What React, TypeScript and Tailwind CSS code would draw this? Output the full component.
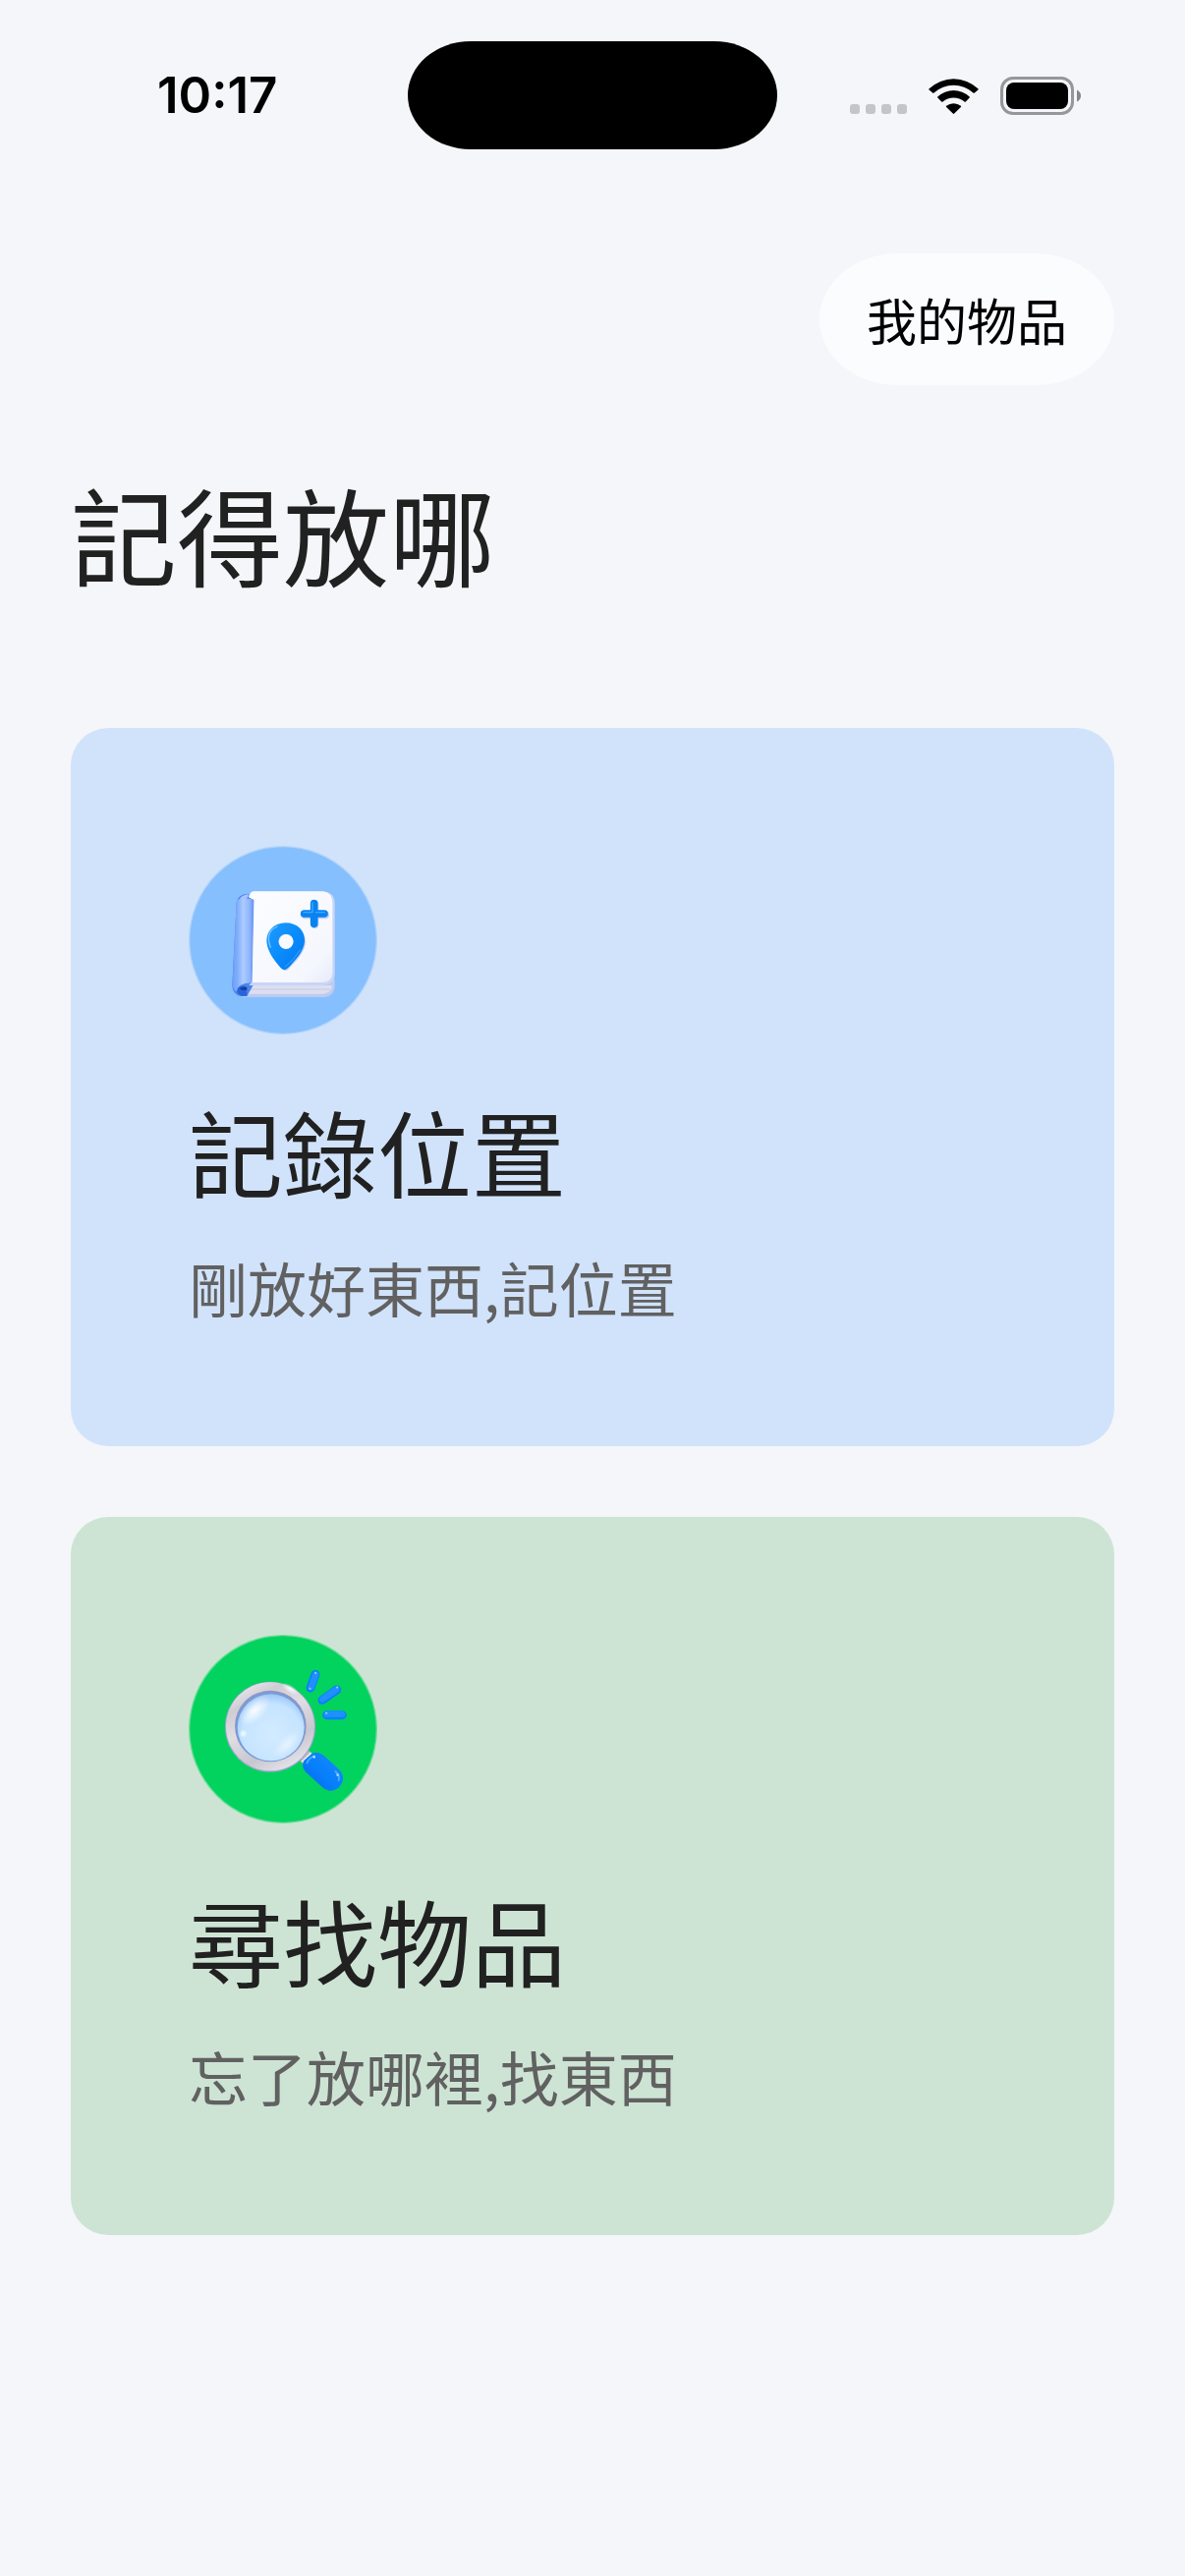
import React from 'react';
import clsx from 'clsx';

const StatusBar = () => (
  <header className="grid grid-cols-[1fr_auto_1fr] items-center pt-[42px] text-black">
    <time className="pl-40 font-[Inter,sans-serif] text-[51px] leading-[60px] font-semibold">10:17</time>
    <div className="h-[110px] w-[376px] rounded-[64px/55px] bg-black" />
    <div className="flex items-center justify-end gap-[22px] pr-[106px]">
      <svg width="58" height="39" viewBox="0 0 58 39" fill="#c4c5c7" aria-hidden="true">
        <rect x="0" y="28" width="10" height="10" rx="3" />
        <rect x="16" y="28" width="10" height="10" rx="3" />
        <rect x="32" y="28" width="10" height="10" rx="3" />
        <rect x="48" y="28" width="10" height="10" rx="3" />
      </svg>
      <svg width="51" height="39" viewBox="0 0 51 39" aria-label="Wi-Fi">
        <path d="M.6 12.3A36 36 0 0 1 50.4 12.3Q51 12.9 50.4 13.5L46.8 16.6Q46.2 17.1 45.5 16.6A29.5 29.5 0 0 0 5.5 16.6Q4.8 17.1 4.2 16.6L.6 13.5Q0 12.9 .6 12.3Z" />
        <path d="M9.3 20.4A23.6 23.6 0 0 1 41.7 20.4Q42.3 21 41.7 21.6L37.8 25.4Q37.2 26 36.5 25.4A17.6 17.6 0 0 0 14.5 25.4Q13.8 26 13.2 25.4L9.3 21.6Q8.7 21 9.3 20.4Z" />
        <path d="M18.1 29.7A12 12 0 0 1 32.9 29.7Q33.5 30.3 32.9 30.9L26.2 37.6Q25.5 38.3 24.8 37.6L18.1 30.9Q17.5 30.3 18.1 29.7Z" />
      </svg>
      <svg width="82" height="39" viewBox="0 0 82 39" aria-label="Battery">
        <rect x="1.5" y="1.5" width="72" height="36" rx="11.5" fill="none" stroke="#969799" strokeWidth="3" />
        <rect x="6" y="6" width="63" height="27" rx="8" />
        <path d="M78 13.5Q82 15.5 82 19.5T78 25.5Z" fill="#858688" />
      </svg>
    </div>
  </header>
);

const NotebookIcon = () => (
  <svg className="size-48" viewBox="36 33 576 576" aria-hidden="true">
    <defs>
      <linearGradient id="spine" x1="0" x2="1">
        <stop offset="0" stopColor="#6c9ff6" />
        <stop offset=".22" stopColor="#7eadfb" />
        <stop offset=".5" stopColor="#aecbff" />
        <stop offset=".78" stopColor="#8fb6fd" />
        <stop offset="1" stopColor="#5f8ff0" />
      </linearGradient>
      <linearGradient id="cover" x1="0" y1="0" x2="1" y2="1">
        <stop offset="0" stopColor="#fcfdff" />
        <stop offset=".8" stopColor="#f5f7fe" />
        <stop offset="1" stopColor="#e6ebfb" />
      </linearGradient>
      <linearGradient id="pin" x1="0" y1="0" x2="1" y2="1">
        <stop offset="0" stopColor="#1f9bff" />
        <stop offset=".5" stopColor="#0a8cfb" />
        <stop offset="1" stopColor="#0575ee" />
      </linearGradient>
    </defs>
    <circle cx="324" cy="321" r="286" fill="#86bffd" stroke="#b0d3fb" strokeWidth="4" />
    {/* back cover and pages */}
    <path d="M205 440H482V462Q480 494 446 495H200Z" fill="#bdcaf2" />
    <path d="M216 459H474Q472 483 446 485H216Z" fill="#dcdff0" />
    <path d="M216 471H468" stroke="#c3c9e2" strokeWidth="3" />
    {/* spine */}
    <path d="M182 206Q188 179 218 179L238 190V450L214 492H196Q168 487 169 456Z" fill="#4c84ea" />
    <path d="M190 198Q196 183 220 181L214 194Z" fill="#a5c5ff" />
    <path d="M182 205Q184 194 196 194H236L229 452Q188 450 181 478Q169 472 170 448Z" fill="url(#spine)" />
    <path d="M214 463Q193 455 185 470Q180 486 200 491H214V477Q204 479 190 469Q196 461 214 463Z" fill="#2865dc" />
    <path d="M190 469Q202 459 214 465V474Q202 478 190 469Z" fill="#153fa9" />
    {/* front cover */}
    <path d="M234 172H447Q482 175 482 209V428Q480 456 447 459H220L230 448L235 197L219 190Q221 174 234 172Z" fill="#c9d5f6" />
    <path d="M236 172H445Q475 175 475 207V422Q473 449 443 450H230L236 197L220 190Q223 173 236 172Z" fill="url(#cover)" />
    {/* pin */}
    <path fillRule="evenodd" d="M335 273C299 273 277 299 278 329C280 360 304 390 322 409Q332 419 342 408C363 386 391 358 393 328C394 297 371 273 335 273ZM335 303A23 23 0 1 1 335 349A23 23 0 1 1 335 303Z" fill="#bccdf5" />
    <path fillRule="evenodd" d="M332 268C296 268 273 294 274 325C276 357 300 387 319 407Q329 416 339 406C361 383 388 355 390 324C391 292 368 268 332 268ZM333 302A23 23 0 1 1 333 348A23 23 0 1 1 333 302Z" fill="url(#pin)" />
    <path d="M286 343Q268 296 306 279" fill="none" stroke="#73c3ff" strokeWidth="4" strokeLinecap="round" />
    <path d="M331 402Q358 381 377 350" fill="none" stroke="#3ba6ff" strokeWidth="3" strokeLinecap="round" />
    {/* plus */}
    <path d="M421 212V273M391 244H453" stroke="#c0d0f5" strokeWidth="24" strokeLinecap="round" />
    <path d="M419 209V271M389 240H450" stroke="#0a82f0" strokeWidth="23" strokeLinecap="round" />
    <path d="M414 207V236H387M424 236H451" fill="none" stroke="#3caaff" strokeWidth="4" strokeLinecap="round" />
  </svg>
);

const MagnifierIcon = () => (
  <svg className="size-48" viewBox="36 42 576 576" aria-hidden="true">
    <defs>
      <linearGradient id="rim" x1=".15" y1="0" x2=".7" y2="1">
        <stop offset="0" stopColor="#f0eff3" />
        <stop offset=".22" stopColor="#cfcdd4" />
        <stop offset=".45" stopColor="#e0dee4" />
        <stop offset=".75" stopColor="#c8c6cf" />
        <stop offset="1" stopColor="#e6e5ec" />
      </linearGradient>
      <radialGradient id="glass" cx=".52" cy=".6" r=".6">
        <stop offset="0" stopColor="#d3ebff" />
        <stop offset=".75" stopColor="#c5e4ff" />
        <stop offset="1" stopColor="#9cc6f7" />
      </radialGradient>
      <radialGradient id="shine">
        <stop offset="0" stopColor="#fff" stopOpacity=".9" />
        <stop offset="1" stopColor="#fff" stopOpacity="0" />
      </radialGradient>
      <linearGradient id="handle" x1="0" y1="1" x2="1" y2="0">
        <stop offset="0" stopColor="#0560e5" />
        <stop offset=".45" stopColor="#077ffb" />
        <stop offset="1" stopColor="#188bff" />
      </linearGradient>
    </defs>
    <circle cx="324" cy="330" r="286" fill="#02d35e" stroke="#6fdc99" strokeWidth="4" />
    {/* neck and handle */}
    <path d="M373 424L402 395L415 407L386 437Z" fill="#b9b6bd" />
    <path d="M382 430L410 402" stroke="#f0eef2" strokeWidth="5" />
    <path d="M388 426L413 404Q430 397 448 410L492 450Q512 468 506 490Q497 516 471 518Q455 517 443 506L392 460Q379 443 388 426Z" fill="url(#handle)" />
    <path d="M397 434Q402 419 420 412M484 459Q499 472 494 486" fill="none" stroke="#4eadff" strokeWidth="5" strokeLinecap="round" />
    <circle cx="419" cy="415" r="4" fill="#b9e0ff" />
    <circle cx="491" cy="470" r="4" fill="#a3d5ff" />
    {/* lens */}
    <circle cx="285" cy="323" r="138" fill="#a3a5d3" />
    <circle cx="285" cy="322" r="135" fill="url(#rim)" />
    <circle cx="286" cy="321" r="109" fill="#8a97c6" />
    <circle cx="286" cy="324" r="105" fill="#6d9fe0" />
    <circle cx="287" cy="325" r="102" fill="url(#glass)" />
    <ellipse cx="238" cy="272" rx="60" ry="32" fill="url(#shine)" transform="rotate(-45 238 272)" />
    <ellipse cx="336" cy="376" rx="56" ry="24" fill="url(#shine)" opacity=".6" transform="rotate(-45 336 376)" />
    <circle cx="203" cy="344" r="13" fill="url(#shine)" />
    <ellipse cx="346" cy="207" rx="30" ry="12" fill="url(#shine)" transform="rotate(32 346 207)" />
    {/* sparks */}
    <g fill="none" strokeLinecap="round">
      <path d="M423 163L408 204M488 210L444 241M458 287H505" stroke="#0b80f8" strokeWidth="27" />
      <path d="M424 164L410 202M487 209L445 238M458 284H504" stroke="#2090ff" strokeWidth="19" />
      <path d="M423 158L424 159M489 203L490 202M456 281H457M406 206L407 207" stroke="#8ccaff" strokeWidth="6" />
    </g>
  </svg>
);

const actions = [
  { title: '記錄位置', hint: '剛放好東西,記位置', tone: 'bg-[#d1e3fb]', Icon: NotebookIcon },
  { title: '尋找物品', hint: '忘了放哪裡,找東西', tone: 'bg-[#cde4d5]', Icon: MagnifierIcon },
];

export default function App() {
  return (
    <div lang="zh-Hant" className="min-h-screen bg-[#f4f6fa] font-['Noto_Sans_CJK_TC',sans-serif] text-[#212121]">
      <StatusBar />
      <main className="flex flex-col px-[72px] pt-[106px] pb-24">
        <button className="self-end rounded-[80px/67px] bg-[#fbfcfe] px-12 py-[33px] text-[51px] leading-[68px] text-black">
          我的物品
        </button>
        <h1 className="mt-[84px] text-[108px] leading-[132px]">記得放哪</h1>
        <div className="mt-[133px] flex flex-col gap-[72px]">
          {actions.map(({ title, hint, tone, Icon }) => (
            <button key={title} className={clsx('flex flex-col items-start rounded-[38px] p-[120px] text-left', tone)}>
              <Icon />
              <span className="mt-[58px] text-[96px] leading-[120px]">{title}</span>
              <span className="mt-9 text-[60px] leading-[85px] text-[#616161]">{hint}</span>
            </button>
          ))}
        </div>
      </main>
    </div>
  );
}
